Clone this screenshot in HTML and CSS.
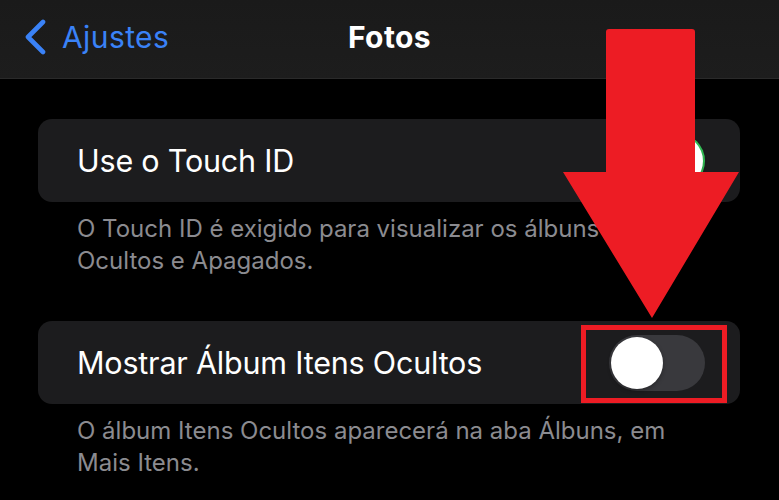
FILE: index.html
```html
<!DOCTYPE html>
<html lang="pt">
<head>
<meta charset="utf-8">
<link rel="stylesheet" href="styles.css">
</head>
<body>
<div class="screen">
  <header class="nav">
    <div class="back">
      <svg class="chev" width="24" height="36" viewBox="0 0 24 36"><path d="M20 3 L5 18 L20 33" fill="none" stroke="#3a82f7" stroke-width="4.6" stroke-linecap="round" stroke-linejoin="round"/></svg>
      <span class="back-label">Ajustes</span>
    </div>
    <h1 class="title">Fotos</h1>
  </header>
  <main class="content">
    <section class="group">
      <div class="card">
        <span class="label">Use o Touch ID</span>
        <span class="toggle on"><span class="knob"></span></span>
      </div>
      <p class="footer">O Touch ID é exigido para visualizar os álbuns Ocultos e Apagados.</p>
    </section>
    <section class="group second">
      <div class="card">
        <span class="label">Mostrar Álbum Itens Ocultos</span>
        <span class="toggle"><span class="knob"></span></span>
      </div>
      <p class="footer">O álbum Itens Ocultos aparecerá na aba Álbuns, em Mais Itens.</p>
    </section>
  </main>
  <svg class="arrow" width="779" height="500" viewBox="0 0 779 500">
    <path d="M609 29 H692 Q695 29 695 32 V172 H739 L652 318 L563 172 H606 V32 Q606 29 609 29 Z" fill="#ed1c24"/>
    <rect x="583.5" y="327.5" width="141" height="73" fill="none" stroke="#ed1c24" stroke-width="5"/>
  </svg>
</div>
</body>
</html>
```
FILE: styles.css
```css
* { box-sizing: border-box; }
html, body { margin: 0; padding: 0; }
body {
  background: #000;
  font-family: "Inter", "Noto Sans", sans-serif;
  width: 779px;
  height: 500px;
  overflow: hidden;
}
.screen { position: relative; width: 779px; height: 500px; }
.nav {
  height: 79px;
  background: linear-gradient(#1a1a1a, #1d1d1d);
  border-bottom: 1px solid #2a2a2a;
  position: relative;
  display: flex;
  align-items: flex-start;
}
.back {
  display: flex;
  align-items: center;
  padding: 19px 0 0 23px;
  gap: 15px;
}
.chev { display: block; }
.back-label {
  color: #3a82f7;
  font-size: 30px;
  letter-spacing: 0.4px;
  line-height: 36px;
}
.title {
  position: absolute;
  left: 0; right: 0;
  top: 19px;
  margin: 0;
  text-align: center;
  color: #fff;
  font-size: 30px;
  font-weight: 700;
  letter-spacing: 0.4px;
  line-height: 36px;
}
.content { padding: 40px 39px 0 38px; }
.group { margin: 0; }
.second { margin-top: 44px; }
.card {
  height: 83px;
  background: #1c1c1e;
  border-radius: 14px;
  display: flex;
  align-items: center;
  justify-content: space-between;
  padding: 0 35px 0 39px;
}
.label {
  color: #fff;
  font-size: 30.5px;
  letter-spacing: -0.2px;
}
.toggle {
  width: 96px;
  height: 56px;
  border-radius: 28px;
  background: #39393d;
  padding: 2px;
  display: flex;
}
.toggle.on { background: #34c759; justify-content: flex-end; }
.knob {
  width: 52px;
  height: 52px;
  border-radius: 50%;
  background: #fff;
  box-shadow: 0 2px 4px rgba(0,0,0,0.3);
}
.footer {
  margin: 0;
  padding: 11px 55px 0 39px;
  color: #8b8b90;
  font-size: 24px;
  line-height: 32px;
}
.arrow { position: absolute; left: 0; top: 0; pointer-events: none; }
```
